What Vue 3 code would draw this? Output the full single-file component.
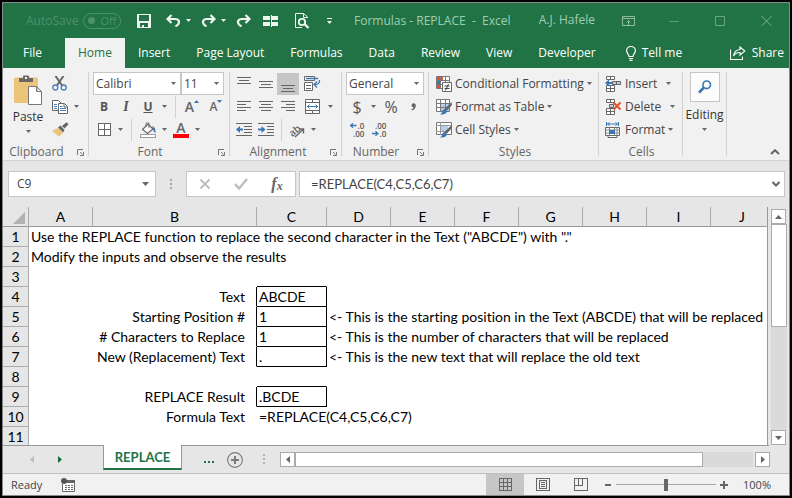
<script setup>
import { ref } from 'vue'

const ribbonTabs = ['File', 'Home', 'Insert', 'Page Layout', 'Formulas', 'Data', 'Review', 'View', 'Developer']
const activeTab = ref('Home')

const columns = ['A', 'B', 'C', 'D', 'E', 'F', 'G', 'H', 'I', 'J']
const rows = [
  { A: 'Use the REPLACE function to replace the second character in the Text ("ABCDE") with "."' },
  { A: 'Modify the inputs and observe the results' },
  {},
  { B: 'Text', C: 'ABCDE' },
  { B: 'Starting Position #', C: '1', D: '<- This is the starting position in the Text (ABCDE) that will be replaced' },
  { B: '# Characters to Replace', C: '1', D: '<- This is the number of characters that will be replaced' },
  { B: 'New (Replacement) Text', C: '.', D: '<- This is the new text that will replace the old text' },
  {},
  { B: 'REPLACE Result', C: '.BCDE' },
  { B: 'Formula Text', C: '=REPLACE(C4,C5,C6,C7)' },
  {},
]
const boxed = [4, 5, 6, 7, 9]

function cellClass(col, row) {
  return {
    label: col === 'B',
    'edge-right': (col === 'B' || col === 'C') && boxed.includes(row),
    'edge-bottom': col === 'C' && (boxed.includes(row) || boxed.includes(row + 1)),
  }
}

const formula = ref('=REPLACE(C4,C5,C6,C7)')
const cellName = ref('C9')
const zoom = ref(50)
</script>

<template>
  <div class="frame">
    <div class="window">
      <header class="titlebar">
        <span class="autosave">AutoSave</span>
        <button class="toggle" aria-label="AutoSave off"><i></i>Off</button>
        <div class="qat">
          <button class="q save" aria-label="Save">
            <svg width="14" height="14" shape-rendering="crispEdges"><path fill="#f0f5f2" fill-rule="evenodd" d="M0 0H14V14H0ZM2 1V7H12V1ZM3 9V13H5V11H7V13H11V9Z" /></svg>
          </button>
          <button class="q" aria-label="Undo">
            <svg width="15" height="14"><path d="M1 5H9C13 5 14 8 12 10.5L9.500 12.500M5.500 1L1.500 5L5.500 9" fill="none" stroke="#f0f5f2" stroke-width="2.200" /></svg>
          </button>
          <button class="q drop" aria-label="Undo history"><svg width="5" height="3"><path d="M0 0H5L2.500 3Z" fill="#f0f5f2" /></svg></button>
          <button class="q" aria-label="Redo">
            <svg width="15" height="14"><path d="M14 5H6C2 5 1 8 3 10.500L5.500 12.500M9.500 1L13.500 5L9.500 9" fill="none" stroke="#f0f5f2" stroke-width="2.200" /></svg>
          </button>
          <button class="q drop" aria-label="Redo history"><svg width="5" height="3"><path d="M0 0H5L2.500 3Z" fill="#f0f5f2" /></svg></button>
          <button class="q" aria-label="Repeat">
            <svg width="15" height="14"><path d="M14 5H6C2 5 1 8 3 10.500L5.500 12.500M9.500 1L13.500 5L9.500 9" fill="none" stroke="#f0f5f2" stroke-width="2.200" /></svg>
          </button>
          <button class="q panes" aria-label="Freeze panes">
            <svg width="16" height="12" shape-rendering="crispEdges"><path fill="#f0f5f2" d="M0 1H7V5H0ZM9 1H15V5H9ZM0 7H7V11H0ZM9 7H15V11H9ZM7.500 0H8.500V12H7.500Z" /></svg>
          </button>
          <button class="q preview" aria-label="Print preview">
            <svg width="15" height="16" fill="none" stroke="#f0f5f2"><path d="M12.500 5V4L8.500 .5H.5V14.500H7M8.500 .5V4.500H12" /><circle cx="7" cy="9" r="3.200" stroke-width="1.800" /><path d="M9.500 11L13.500 15" stroke-width="2.400" /></svg>
          </button>
          <button class="q more" aria-label="Customize toolbar"><svg width="5" height="6"><path d="M0 0H5V1H0ZM0 3H5L2.500 6Z" fill="#f0f5f2" /></svg></button>
        </div>
        <h1>Formulas - REPLACE&nbsp; -&nbsp; Excel</h1>
        <span class="user">A.J. Hafele</span>
        <div class="winbtns">
          <button aria-label="Ribbon display options"><svg width="13" height="10" fill="none" stroke="#8fbca1"><path d="M.5 .5H12.500V9.500H.5ZM.5 2.500H12.500M6.500 9V4.500M4.500 6.500L6.500 4.500L8.500 6.500" /></svg></button>
          <button aria-label="Minimize"><svg width="10" height="10"><path d="M0 5.500H10" stroke="#5c9b77" /></svg></button>
          <button aria-label="Maximize"><svg width="10" height="10"><path d="M.5 .5H9.500V9.500H.5Z" fill="none" stroke="#6ba683" /></svg></button>
          <button aria-label="Close"><svg width="11" height="10"><path d="M.5 0L10.500 10M10.500 0L.5 10" stroke="#7bb091" /></svg></button>
        </div>
      </header>

      <nav class="tabs">
        <button v-for="t in ribbonTabs" :key="t" :class="{ active: t === activeTab, file: t === 'File' }" @click="activeTab = t">{{ t }}</button>
        <button class="tell">
          <svg width="10" height="15" fill="none" stroke="#fff"><path d="M3 10.500C3 8 .6 7.500 .6 4.600A4.400 4.100 0 0 1 9.400 4.600C9.400 7.500 7 8 7 10.500ZM3 12.500H7M3.500 14.300H6.500" stroke-width="1.200" /></svg>
          Tell me
        </button>
        <button class="share">
          <svg width="16" height="14" fill="none" stroke="#fff"><path d="M.5 3.500V13.500H12.500V10.500M10 1L14.800 5L10 9V6.500C7 6.300 5 7.500 3.500 10C4 6.500 6 4 10 3.500Z" stroke-width="1.100" /></svg>
          Share
        </button>
      </nav>

      <section class="ribbon">
        <div class="group clipboard">
          <div class="clip-body">
            <button class="paste">
              <svg width="28" height="30"><rect y="2.500" width="24" height="25.500" rx="1.500" fill="#ecc57b" /><path d="M5 7V3H9V1.500Q9 .5 10 .5H14Q15 .5 15 1.500V3H19V7Z" fill="#686868" /><path d="M11 2H13V4H11Z" fill="#f1f1f1" /><path d="M14.500 11.500H22.500L27.500 16.500V29.500H14.500ZM22.500 11.500V16.500H27.500" fill="#fff" stroke="#777" /></svg>
              <span>Paste</span>
              <svg class="caret" width="5" height="3"><path d="M0 0H5L2.500 3Z" /></svg>
            </button>
            <div class="stack">
              <div class="row"><button class="ib" aria-label="Cut"><svg width="16" height="15"><path d="M3.500 0L10.500 10M11.500 0L4.500 10" stroke="#666" stroke-width="2" /><circle cx="3.300" cy="11.500" r="2.500" fill="none" stroke="#4a7ebb" stroke-width="1.300" /><circle cx="11.700" cy="11.500" r="2.500" fill="none" stroke="#4a7ebb" stroke-width="1.300" /></svg></button></div>
              <div class="row"><button class="ib" aria-label="Copy"><svg width="16" height="14"><path d="M.5 .5H6.500L9.500 3.500V10.500H.5Z" fill="#fff" stroke="#666" /><path d="M2 4.500H5M2 6.500H5M2 8.500H5" stroke="#4a7ebb" /><path d="M6.500 3.500H12.500L15.500 6.500V13.500H6.500ZM12 4V7H15" fill="#fff" stroke="#666" /><path d="M8 6.500H10.500M8 8.500H14M8 10.500H14" stroke="#4a7ebb" /></svg></button><button class="cb" aria-label="Copy options"><svg class="caret" width="5" height="3"><path d="M0 0H5L2.500 3Z" /></svg></button></div>
              <div class="row"><button class="ib" aria-label="Format painter"><svg width="17" height="15"><path d="M0 9L6 6L11 11L7 14.500Z" fill="#ecc57b" /><path d="M6 5.500L8.500 3.500L12.500 8L11 10.500ZM10 4L14.500 .3L16.500 2.300L12.500 6.500Z" fill="#666" /></svg></button></div>
            </div>
          </div>
          <div class="caption"><span>Clipboard</span><button class="launch" aria-label="Clipboard settings"><svg width="7" height="7"><path d="M.5 6V.5H6M3 3L5.500 5.500M6.500 3V6.500H3" /></svg></button></div>
        </div>

        <div class="group font">
          <div class="row combos">
            <label class="combo family"><select aria-label="Font"><option>Calibri</option></select><svg class="caret" width="5" height="3"><path d="M0 0H5L2.500 3Z" /></svg></label>
            <label class="combo size"><select aria-label="Font size"><option>11</option></select><svg class="caret" width="5" height="3"><path d="M0 0H5L2.500 3Z" /></svg></label>
          </div>
          <div class="row">
            <button class="ib"><b>B</b></button>
            <button class="ib"><b><em>I</em></b></button>
            <button class="ib"><b><u>U</u></b></button>
            <button class="cb" aria-label="Underline options"><svg class="caret" width="5" height="3"><path d="M0 0H5L2.500 3Z" /></svg></button>
            <i class="vr"></i>
            <button class="ib glyph big">A<svg width="5" height="3"><path d="M0 3H5L2.500 0Z" fill="#3a76b4" /></svg></button>
            <button class="ib glyph">A<svg width="5" height="3"><path d="M0 0H5L2.500 3Z" fill="#3a76b4" /></svg></button>
          </div>
          <div class="row">
            <button class="ib" aria-label="Borders"><svg width="13" height="13" shape-rendering="crispEdges"><path d="M.5 .5H12.500V12.500H.5ZM6.500 0V13M0 6.500H13" fill="#fff" stroke="#666" /></svg></button>
            <button class="cb" aria-label="Border options"><svg class="caret" width="5" height="3"><path d="M0 0H5L2.500 3Z" /></svg></button>
            <i class="vr"></i>
            <button class="ib" aria-label="Fill color"><svg width="17" height="16"><path d="M2.500 7.500L8 2L13 7L7.500 11.500Z" fill="#fff" stroke="#666" stroke-width="1.200" /><path d="M6 5V1.500Q7.500 -.5 9 1.500V6" fill="none" stroke="#666" /><path d="M12 4Q16 5 15.500 11Q13 10 13 6Z" fill="#3a76b4" /><path d="M.5 12.500H15.500V15.500H.5Z" fill="#fff" stroke="#999" /></svg></button>
            <button class="cb" aria-label="Fill options"><svg class="caret" width="5" height="3"><path d="M0 0H5L2.500 3Z" /></svg></button>
            <button class="ib fontcolor">A</button>
            <button class="cb" aria-label="Font color options"><svg class="caret" width="5" height="3"><path d="M0 0H5L2.500 3Z" /></svg></button>
          </div>
          <div class="caption"><span>Font</span><button class="launch" aria-label="Font settings"><svg width="7" height="7"><path d="M.5 6V.5H6M3 3L5.500 5.500M6.500 3V6.500H3" /></svg></button></div>
        </div>

        <div class="group align">
          <div class="row">
            <button class="ib" aria-label="Top align"><svg class="ln" width="14" height="16"><path d="M0 1.500H14M2 4.500H12M0 7.500H14" /></svg></button>
            <button class="ib" aria-label="Middle align"><svg class="ln" width="14" height="16"><path d="M0 5.500H14M2 8.500H12M0 11.500H14" /></svg></button>
            <button class="ib on" aria-label="Bottom align"><svg class="ln" width="14" height="16"><path d="M0 9.500H14M2 12.500H12M0 15.500H14" /></svg></button>
            <button class="ib wide" aria-label="Wrap text"><svg width="17" height="16" fill="none" stroke="#666"><path d="M.5 .5H10.500V4.500H.5ZM.5 6.500H8.500V14.500H.5ZM2 9.500H7M2 12.500H7" fill="#fff" /><path d="M2 2.500H14M15.500 4Q16 8.500 11 8.500M13 5.500L10 8.500L13 11.500" stroke="#3a76b4" stroke-width="1.300" /></svg></button>
          </div>
          <div class="row">
            <button class="ib" aria-label="Align left"><svg class="ln" width="14" height="11"><path d="M0 .5H14M0 3.500H9M0 6.500H14M0 9.500H9" /></svg></button>
            <button class="ib" aria-label="Center"><svg class="ln" width="14" height="11"><path d="M0 .5H14M2 3.500H12M0 6.500H14M2 9.500H12" /></svg></button>
            <button class="ib" aria-label="Align right"><svg class="ln" width="14" height="11"><path d="M0 .5H14M5 3.500H14M0 6.500H14M5 9.500H14" /></svg></button>
            <button class="ib wide" aria-label="Merge and center"><svg width="15" height="15" fill="none" stroke="#666"><path d="M.5 .5H14.500V14.500H.5ZM.5 3.500H14.500M.5 11.500H14.500M7.500 .5V3.500M7.500 11.500V14.500" fill="#fff" /><path d="M2 7.500H13M4.500 5.500L2.500 7.500L4.500 9.500M10.500 5.500L12.500 7.500L10.500 9.500" stroke="#3a76b4" /></svg></button>
            <button class="cb" aria-label="Merge options"><svg class="caret" width="5" height="3"><path d="M0 0H5L2.500 3Z" /></svg></button>
          </div>
          <div class="row">
            <button class="ib" aria-label="Decrease indent"><svg class="ln" width="16" height="13"><path d="M0 .5H16M8 3.500H16M8 6.500H16M8 9.500H16M0 12.500H16" /><path class="blue" d="M0 6.500L4 3V5.500H7V7.500H4V10Z" /></svg></button>
            <button class="ib" aria-label="Increase indent"><svg class="ln" width="16" height="13"><path d="M0 .5H16M9 3.500H16M9 6.500H16M9 9.500H16M0 12.500H16" /><path class="blue" d="M7.500 6.500L3.500 3V5.500H0V7.500H3.500V10Z" /></svg></button>
            <i class="vr tight"></i>
            <button class="ib" aria-label="Orientation"><svg class="loose" width="18" height="16"><text x="1" y="12" transform="rotate(-40 7 9)" class="ab">ab</text><path d="M7 15L15 7.500M11 7H15.500V11.500" fill="none" stroke="#666" stroke-width="1.400" /></svg></button>
            <button class="cb" aria-label="Orientation options"><svg class="caret" width="5" height="3"><path d="M0 0H5L2.500 3Z" /></svg></button>
          </div>
          <div class="caption"><span>Alignment</span><button class="launch" aria-label="Alignment settings"><svg width="7" height="7"><path d="M.5 6V.5H6M3 3L5.500 5.500M6.500 3V6.500H3" /></svg></button></div>
        </div>

        <div class="group number">
          <div class="row"><label class="combo format"><select aria-label="Number format"><option>General</option></select><svg class="caret" width="5" height="3"><path d="M0 0H5L2.500 3Z" /></svg></label></div>
          <div class="row">
            <button class="ib sym">$</button>
            <button class="cb" aria-label="Currency options"><svg class="caret" width="5" height="3"><path d="M0 0H5L2.500 3Z" /></svg></button>
            <button class="ib sym pct">%</button>
            <button class="ib comma" aria-label="Comma style"><svg width="5" height="8"><path d="M.5 2.200A2 2 0 0 1 4.800 2.500Q4.800 6 1 7.500L.5 6.500Q2.300 5.500 2.500 4.200A2 2 0 0 1 .5 2.200Z" fill="#666" /></svg></button>
          </div>
          <div class="row">
            <button class="ib" aria-label="Increase decimal"><span class="decimals"><span><svg width="7" height="5"><path d="M0 2.500H6.500M3 .3L.7 2.500L3 4.700" /></svg>.0</span><span>.00</span></span></button>
            <button class="ib" aria-label="Decrease decimal"><span class="decimals"><span>.00</span><span><svg width="7" height="5"><path d="M0 2.500H6.500M3.500 .3L5.800 2.500L3.500 4.700" /></svg>.0</span></span></button>
          </div>
          <div class="caption"><span>Number</span><button class="launch" aria-label="Number settings"><svg width="7" height="7"><path d="M.5 6V.5H6M3 3L5.500 5.500M6.500 3V6.500H3" /></svg></button></div>
        </div>

        <div class="group styles">
          <div class="row"><button class="cmd"><svg width="16" height="16"><path d="M.5 .5H13.500V12.500H.5Z" fill="#fff" stroke="#777" /><path d="M1 1H7V4H1ZM1 8H4V12H1Z" fill="#e0532e" /><path d="M1 5H4V8H1Z" fill="#3a76b4" /><path d="M4.500 0V13M9.500 0V7M0 4.500H14M0 8.500H6" stroke="#777" /><path d="M6.500 6.500H15.500V15.500H6.500Z" fill="#fff" stroke="#666" /><path d="M8.500 10H13.500M8.500 12.500H13.500M12.500 8L9.500 14.500" stroke="#444" /></svg>Conditional Formatting<svg class="caret" width="5" height="3"><path d="M0 0H5L2.500 3Z" /></svg></button></div>
          <div class="row"><button class="cmd"><svg width="16" height="16"><path d="M.5 .5H13.500V12.500H.5Z" fill="#fff" stroke="#777" /><path d="M5 5H13V12H5Z" fill="#b8cee6" /><path d="M4.500 0V13M9.500 0V13M0 4.500H14M0 8.500H14" stroke="#777" /><path d="M15.500 3L16 6L10.500 12L8 10.500Z" fill="#666" /><path d="M8 10L11 12.500Q10 16 4 15.500Q6.500 14 6 12Z" fill="#3a76b4" /></svg>Format as Table<svg class="caret" width="5" height="3"><path d="M0 0H5L2.500 3Z" /></svg></button></div>
          <div class="row"><button class="cmd"><svg width="16" height="16"><path d="M.5 .5H15.500V12.500H.5Z" fill="#fff" stroke="#777" /><path d="M5 4H12V9H5Z" fill="#b8cee6" /><path d="M4.500 0V13M0 3.500H16M0 9.500H10" stroke="#999" /><path d="M15.500 3L16 6L10.500 12L8 10.500Z" fill="#666" /><path d="M8 10L11 12.500Q10 16 4 15.500Q6.500 14 6 12Z" fill="#3a76b4" /></svg>Cell Styles<svg class="caret" width="5" height="3"><path d="M0 0H5L2.500 3Z" /></svg></button></div>
          <div class="caption"><span>Styles</span></div>
        </div>

        <div class="group cells">
          <div class="row"><button class="cmd spaced"><svg width="17" height="16"><path d="M1.500 .5H9.500V3.500H1.500ZM5.500 .5V3.500M1.500 9.500H9.500V15.500H1.500ZM5.500 9.500V15.500M1.500 12.500H9.500" fill="#fff" stroke="#666" /><path d="M7.500 5.500H15.500V8.500H7.500ZM11.500 5.500V8.500" fill="#b8cee6" stroke="#666" /><path d="M0 7L4 3.500V6H7V8H4V10.500Z" fill="#3a76b4" /></svg>Insert<svg class="caret" width="5" height="3"><path d="M0 0H5L2.500 3Z" /></svg></button></div>
          <div class="row"><button class="cmd spaced"><svg width="17" height="16"><path d="M1.500 .5H9.500V3.500H1.500ZM5.500 .5V3.500M1.500 9.500H9.500V15.500H1.500ZM5.500 9.500V15.500M1.500 12.500H9.500" fill="#fff" stroke="#666" /><path d="M4.500 5.500H8.500V8.500H4.500Z" fill="#b8cee6" stroke="#666" /><path d="M8.500 3.500L15.500 10.500M15.500 3.500L8.500 10.500" stroke="#e0532e" stroke-width="2" /></svg>Delete<svg class="caret" width="5" height="3"><path d="M0 0H5L2.500 3Z" /></svg></button></div>
          <div class="row"><button class="cmd"><svg width="17" height="16"><path d="M2.500 2H12.500M1.500 0V4M13.500 0V4M4.500 .5L2.500 2L4.500 3.500M10.500 .5L12.500 2L10.500 3.500" fill="none" stroke="#3a76b4" /><path d="M.5 5.500H14.500V13.500H.5ZM3 13.500V15.500H12V13.500" fill="#fff" stroke="#666" /><path d="M4.500 5.500V13.500M9.500 5.500V13.500M12 5.500V13.500M.5 8H14.500M.5 11H14.500" stroke="#888" /><path d="M4 8H10V12H4Z" fill="#3a76b4" /></svg>Format<svg class="caret" width="5" height="3"><path d="M0 0H5L2.500 3Z" /></svg></button></div>
          <div class="caption"><span>Cells</span></div>
        </div>

        <div class="group editing">
          <button class="edit">
            <span class="tile"><svg width="14" height="14"><circle cx="8.700" cy="4.800" r="3.800" fill="none" stroke="#3a76b4" stroke-width="1.600" /><path d="M6 7.500L1 12.500" stroke="#3a76b4" stroke-width="2.600" /></svg></span>
            Editing
            <svg class="caret" width="5" height="3"><path d="M0 0H5L2.500 3Z" /></svg>
          </button>
        </div>
        <button class="collapse" aria-label="Collapse ribbon"><svg width="10" height="6"><path d="M1 5L5 1.200L9 5" fill="none" stroke="#666" stroke-width="2" /></svg></button>
      </section>

      <section class="formulabar">
        <label class="namebox"><input v-model="cellName" aria-label="Name box"><svg class="caret" width="7" height="4"><path d="M0 0H7L3.500 4Z" /></svg></label>
        <svg class="dots" width="2" height="12"><path d="M0 1H2V3H0ZM0 5H2V7H0ZM0 9H2V11H0Z" fill="#a6a6a6" /></svg>
        <div class="fxbox">
          <button aria-label="Cancel"><svg width="12" height="12"><path d="M1.500 1.500L10.500 10.500M10.500 1.500L1.500 10.500" stroke="#bdbdbd" stroke-width="1.800" /></svg></button>
          <button aria-label="Enter"><svg width="14" height="12"><path d="M1 6L5 10.500L13 1" fill="none" stroke="#bdbdbd" stroke-width="2.400" /></svg></button>
          <button class="fx">f<small>x</small></button>
        </div>
        <label class="finput"><input v-model="formula" aria-label="Formula"><svg width="8" height="6"><path d="M.5 1L4 4.500L7.500 1" fill="none" stroke="#666" stroke-width="2" /></svg></label>
      </section>

      <main class="sheet">
        <div class="gridwrap">
          <table>
            <colgroup>
              <col class="c-head"><col class="c-std"><col class="c-b"><col class="c-c"><col v-for="n in 6" :key="n" class="c-std"><col>
            </colgroup>
            <thead>
              <tr>
                <th class="corner"><svg width="12" height="12"><path d="M12 0V12H0Z" fill="#b1b1b1" /></svg></th>
                <th v-for="c in columns" :key="c">{{ c }}</th>
              </tr>
            </thead>
            <tbody>
              <tr v-for="(r, i) in rows" :key="i">
                <th>{{ i + 1 }}</th>
                <td v-for="c in columns" :key="c" :class="cellClass(c, i + 1)">{{ r[c] }}</td>
              </tr>
            </tbody>
          </table>
        </div>
        <div class="vscroll">
          <button aria-label="Scroll up"><svg width="7" height="4"><path d="M0 4H7L3.500 0Z" fill="#666" /></svg></button>
          <div class="vtrack"><div class="vthumb"></div></div>
          <button aria-label="Scroll down"><svg width="7" height="4"><path d="M0 0H7L3.500 4Z" fill="#666" /></svg></button>
        </div>
      </main>

      <div class="tabstrip">
        <div class="strip">
          <div class="tabnav">
            <button aria-label="Previous sheet"><svg width="4" height="7"><path d="M4 0V7L0 3.500Z" fill="#bdbdbd" /></svg></button>
            <button aria-label="Next sheet"><svg width="4" height="7"><path d="M0 0V7L4 3.500Z" fill="#16693a" /></svg></button>
          </div>
          <button class="sheettab">REPLACE</button>
          <button class="more-sheets" aria-label="More sheets"><svg width="11" height="2"><path d="M0 0H2V2H0ZM4 0H6V2H4ZM8 0H10V2H8Z" fill="#217346" /></svg></button>
          <button class="add" aria-label="New sheet"><svg width="16" height="16" fill="none" stroke="#7a7a7a"><circle cx="8" cy="8" r="7.400" stroke-width="1.100" /><path d="M8 4V12M4 8H12" stroke-width="2" /></svg></button>
          <svg class="dots" width="2" height="11"><path d="M0 0H2V2H0ZM0 4H2V6H0ZM0 8H2V10H0Z" fill="#b0b0b0" /></svg>
          <div class="hscroll">
            <button aria-label="Scroll left"><svg width="4" height="7"><path d="M4 0V7L0 3.500Z" fill="#666" /></svg></button>
            <div class="htrack"><div class="hthumb"></div></div>
            <button aria-label="Scroll right"><svg width="4" height="7"><path d="M0 0V7L4 3.500Z" fill="#666" /></svg></button>
          </div>
        </div>
      </div>

      <footer class="status">
        <span class="ready">Ready</span>
        <button aria-label="Record macro"><svg width="14" height="14"><path d="M1.500 6V13.500H13.500V2.500H5" fill="#fff" stroke="#666" /><path d="M5 2H14V5H5Z" fill="#666" /><path d="M4 7.500H12M4 9.500H12M4 11.500H12" stroke="#666" stroke-dasharray="2 1" /><circle cx="3" cy="3" r="3" fill="#555" /></svg></button>
        <div class="views">
          <button class="on" aria-label="Normal view"><svg width="13" height="13" shape-rendering="crispEdges"><path d="M.5 .5H12.500V12.500H.5ZM4.500 0V13M8.500 0V13M0 4.500H13M0 8.500H13" fill="none" stroke="#666" /></svg></button>
          <button aria-label="Page layout view"><svg width="14" height="13" shape-rendering="crispEdges"><path d="M.5 .5H13.500V12.500H.5ZM3.500 2.500H10.500V10.500H3.500ZM5 4.500H9M5 6.500H9M5 8.500H9" fill="none" stroke="#666" /></svg></button>
          <button aria-label="Page break view"><svg width="14" height="13" shape-rendering="crispEdges"><path d="M.5 .5H13.500V12.500H.5ZM4.500 .5V7.500M.5 7.500H8.500V.5" fill="none" stroke="#666" /></svg></button>
        </div>
        <button class="zoombtn" aria-label="Zoom out"><svg width="6" height="8"><path d="M0 3H6V5H0Z" fill="#666" /></svg></button>
        <input v-model="zoom" class="zoom" type="range" min="0" max="100" aria-label="Zoom">
        <button class="zoombtn" aria-label="Zoom in"><svg width="8" height="8"><path d="M0 3H3V0H5V3H8V5H5V8H3V5H0Z" fill="#666" /></svg></button>
        <button class="percent">100%</button>
      </footer>
    </div>
  </div>
</template>

<style>
body { background: #000; }
</style>

<style scoped>
* { box-sizing: border-box; }
button { border: 0; padding: 0; margin: 0; background: none; font: inherit; color: inherit; display: flex; align-items: center; justify-content: center; flex: none; }
svg { display: block; flex: none; }
input, select { font: inherit; color: inherit; border: 0; outline: 0; background: none; min-width: 0; width: 100%; }
.frame { background: #000; padding: 2px; height: 100vh; font: 12px/16px "Open Sans", "Noto Sans", sans-serif; color: #444; }
.window { height: 100%; border: 1px solid #8a8a8a; display: flex; flex-direction: column; background: #e6e6e6; overflow: hidden; white-space: nowrap; }

.titlebar { height: 35px; flex: none; background: #217346; display: flex; align-items: center; padding-left: 23px; color: #9fceb2; }
.autosave { width: 57px; color: #4d9169; }
.toggle { width: 38px; height: 16px; border: 1px solid #4d9169; border-radius: 8px; color: #4d9169; font-size: 11px; gap: 6px; }
.toggle i { width: 7px; height: 7px; border-radius: 50%; background: #4d9169; }
.qat { display: flex; align-items: center; margin-left: 12px; width: 221px; }
.q { width: 24px; height: 24px; }
.save { width: 22px; margin-right: 6px; }
.drop { width: 6px; margin-right: 5px; }
.panes, .preview { width: 30px; margin-left: 1px; }
.more { width: 20px; margin-left: 2px; }
.titlebar h1 { margin: 0; font: inherit; flex: 1; }
.winbtns { display: flex; margin-left: 10px; }
.user { padding-bottom: 2px; }
.winbtns button { width: 46px; height: 30px; }

.tabs { height: 30px; flex: none; background: #217346; color: #fff; display: flex; align-items: stretch; }
.tabs button { padding: 0 13px; gap: 6px; }
.tabs .file { padding: 0 23px 0 20px; }
.tabs .active { background: #f1f1f1; color: #217346; }
.tabs .tell { margin-left: 4px; }
.tabs .share { margin-left: auto; padding: 0 5px; }

.ribbon { background: #f1f1f1; height: 93px; flex: none; border-bottom: 1px solid #d2d2d2; display: grid; grid-template-columns: 86px 141px 112px 87px 170px 84px 44px 1fr; padding-top: 4px; }
.group { border-right: 1px solid #d2d2d2; margin-bottom: 4px; height: 84px; }
.row { height: 23px; display: flex; align-items: center; }
.ib { width: 22px; height: 22px; }
.ib.on { background: #c6c6c6; }
.ib.wide { width: 26px; }
.cb { width: 11px; height: 22px; }
.caret { fill: #666; }
.vr { width: 1px; height: 22px; margin: 0 5px; background: #d2d2d2; }
.vr.tight { margin: 0 4px; }
.caption { height: 20px; display: flex; align-items: center; color: #666; padding-right: 4px; padding-top: 2px; }
.caption span { flex: 1; text-align: center; }
.launch { width: 8px; height: 10px; margin-left: 6px; }
.launch svg { fill: none; stroke: #777; }
.clip-body { display: flex; height: 69px; }
.paste { flex-direction: column; width: 46px; justify-content: flex-start; padding: 3px 0 0 4px; }
.paste span { margin: 4px 0 5px; color: #333; }
.font, .number { padding-left: 4px; }
.align { padding-left: 3px; }
.font .caption, .number .caption { margin-left: -4px; }
.combo { display: grid; height: 23px; background: #fff; border: 1px solid #c6c6c6; align-items: center; }
.combo > * { grid-area: 1 / 1; }
.combo select { appearance: none; padding: 0 2px; height: 21px; }
.combo .caret { justify-self: end; margin-right: 4px; pointer-events: none; }
.family { width: 88px; }
.size { width: 43px; }
.format { width: 78px; }
.ib b { font-size: 12px; color: #555; }
.ib em { font-family: "Liberation Serif", serif; font-size: 14px; }
.glyph { color: #666; font-size: 12px; font-weight: 600; }
.glyph.big { font-size: 14px; margin-right: 2px; }
.glyph svg { align-self: flex-start; margin-top: 4px; }
.fontcolor { width: 16px; height: 16px; margin: 0 3px; font-weight: 600; font-size: 14px; line-height: 12px; color: #666; border-bottom: 4px solid #f00; }
.ln { fill: none; stroke: #666; shape-rendering: crispEdges; }
.ln .blue { fill: #3a76b4; stroke: none; shape-rendering: auto; }
.loose { overflow: visible; }
.ab { font: 600 10px "Open Sans", sans-serif; fill: #666; }
.decimals { display: flex; flex-direction: column; align-items: flex-end; font: 600 8px/8px "Open Sans", sans-serif; color: #555; }
.decimals > span { display: flex; align-items: center; height: 8px; }
.decimals svg { fill: none; stroke: #3a76b4; stroke-width: 1.3; margin-right: 1px; }
.sym { font-size: 16px; color: #555; }
.pct { width: 24px; }
.comma { width: 20px; }
.styles { padding-left: 7px; }
.cells { padding-left: 6px; }
.cmd { gap: 3px; }
.spaced .caret { margin-left: 6px; }
.edit { flex-direction: column; width: 100%; gap: 5px; color: #333; }
.tile { width: 30px; height: 30px; border: 1px solid #c6c6c6; background: #fcfcfc; display: grid; place-items: center; }
.collapse { justify-self: end; align-self: end; width: 20px; height: 16px; margin-right: 4px; }

.formulabar { height: 46px; flex: none; display: flex; align-items: center; padding: 0 4px 0 5px; }
.namebox, .fxbox, .finput { height: 26px; background: #fff; border: 1px solid #c6c6c6; display: flex; align-items: center; }
.namebox { width: 148px; padding: 0 6px; }
.dots { margin: 0 14px; }
.fxbox { width: 110px; justify-content: space-around; }
.fxbox button { width: 30px; height: 22px; }
.fx { font: italic 700 16px/16px "Liberation Serif", serif; color: #666; }
.fx small { font-size: 12px; padding-top: 3px; }
.finput { flex: 1; margin-left: 3px; padding: 0 4px 0 9px; font: 13px/20px Lato, sans-serif; }

.sheet { flex: 1; min-height: 0; display: flex; }
.gridwrap { flex: 1; min-width: 0; overflow: hidden; border-right: 1px solid #999; background: #fff; }
table { border-collapse: separate; border-spacing: 0; table-layout: fixed; width: 100%; font: 14px/18px Lato, sans-serif; font-variant-ligatures: none; color: #000; }
.c-head { width: 26px; }
.c-std { width: 64px; }
.c-b { width: 164px; }
.c-c { width: 70px; }
th { font-weight: 400; background: #e6e6e6; height: 20px; padding: 0; border-right: 1px solid #ababab; border-bottom: 1px solid #ababab; text-align: center; }
thead th { border-bottom-color: #999; }
thead th:last-child { border-right-color: #e6e6e6; padding-left: 7px; }
.corner svg { margin: 3px 0 0 10px; }
td { height: 20px; padding: 1px 0 0 2px; border-right: 1px solid transparent; border-bottom: 1px solid transparent; line-height: 18px; }
td.label { text-align: right; padding-right: 11px; }
.edge-right { border-right-color: #000; }
.edge-bottom { border-bottom-color: #000; }
.vscroll { width: 21px; padding: 2px 2px 0 3px; display: flex; flex-direction: column; }
.vscroll button, .hscroll button { width: 15px; height: 15px; background: #fff; border: 1px solid #ababab; }
.vtrack { flex: 1; background: #dadada; }
.vthumb { height: 50%; background: #fff; border: 1px solid #ababab; }

.tabstrip { height: 29px; flex: none; padding-right: 20px; border-bottom: 1px solid #c0c0c0; }
.strip { height: 28px; border-top: 1px solid #999; display: flex; align-items: center; }
.tabnav { width: 100px; display: flex; padding-left: 15px; }
.tabnav button { width: 28px; height: 20px; }
.sheettab { align-self: flex-start; width: 79px; height: 25px; margin-top: -1px; background: #fff; border: 1px solid #999; border-top: 0; border-bottom: 2px solid #217346; color: #217346; font: 700 13px/20px Lato, sans-serif; }
.more-sheets { width: 34px; height: 20px; margin: 5px 0 0 10px; }
.strip .add { margin-left: 1px; }
.strip .dots { margin: 0 15px 0 20px; }
.hscroll { flex: 1; display: flex; margin-right: -1px; }
.htrack { flex: 1; margin-right: 2px; height: 15px; background: #dadada; }
.hthumb { width: 89%; height: 15px; background: #fff; border: 1px solid #ababab; }

.status { height: 21px; flex: none; background: #f1f1f1; display: flex; align-items: center; padding: 0 18px 0 8px; font-size: 11px; }
.ready { width: 50px; }
.views { margin-left: auto; display: flex; align-self: stretch; margin-right: 2px; }
.views button { width: 38px; }
.views .on { background: #c6c6c6; }
.zoombtn { width: 12px; height: 16px; }
.zoom { appearance: none; width: 100px; margin: 0 2px; height: 12px; background: linear-gradient(#a6a6a6, #a6a6a6) center / 100% 1px no-repeat; }
.zoom::-webkit-slider-thumb { appearance: none; width: 4px; height: 12px; background: #666; border-radius: 0; }
.percent { width: 41px; justify-content: flex-end; }
</style>
